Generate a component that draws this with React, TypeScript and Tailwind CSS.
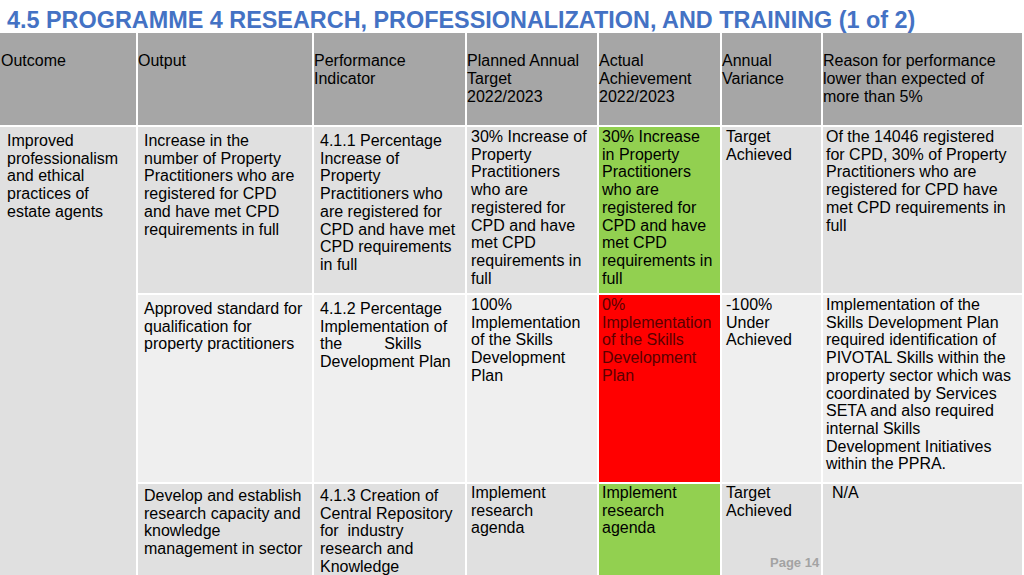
import type { ReactNode } from "react";

type Cell = {
  lines: ReactNode[];
  bg: string;
  pad: string;
  text?: string;
};

const headers = [
  ["Outcome"],
  ["Output"],
  ["Performance", "Indicator"],
  ["Planned Annual", "Target", "2022/2023"],
  ["Actual", "Achievement", "2022/2023"],
  ["Annual", "Variance"],
  ["Reason for performance", "lower than expected of", "more than 5%"],
];

const rowA = "bg-[#e0e0e0]";
const rowB = "bg-[#efefef]";
const green = "bg-[#92d050]";
const red = "bg-[#ff0000]";

const rows: Cell[][] = [
  [
    {
      lines: ["Increase in the", "number of Property", "Practitioners who are", "registered for CPD", "and have met CPD", "requirements in full"],
      bg: rowA,
      pad: "pl-[6px] pt-[5px]",
    },
    {
      lines: ["4.1.1 Percentage", "Increase of", "Property", "Practitioners who", "are registered for", "CPD and have met", "CPD requirements", "in full"],
      bg: rowA,
      pad: "pl-[6px] pt-[5px]",
    },
    {
      lines: ["30% Increase of", "Property", "Practitioners", "who are", "registered for", "CPD and have", "met CPD", "requirements in", "full"],
      bg: rowA,
      pad: "pl-[4px] pt-[1px]",
    },
    {
      lines: ["30% Increase", "in Property", "Practitioners", "who are", "registered for", "CPD and have", "met CPD", "requirements in", "full"],
      bg: green,
      pad: "pl-[3px] pt-[1px]",
    },
    { lines: ["Target", "Achieved"], bg: rowA, pad: "pl-[4px] pt-[1px]" },
    {
      lines: ["Of the 14046 registered", "for CPD, 30% of Property", "Practitioners who are", "registered for CPD have", "met CPD requirements in", "full"],
      bg: rowA,
      pad: "pl-[3px] pt-[1px]",
    },
  ],
  [
    {
      lines: ["Approved standard for", "qualification for", "property practitioners"],
      bg: rowB,
      pad: "pl-[6px] pt-[5px]",
    },
    {
      lines: [
        "4.1.2 Percentage",
        "Implementation of",
        <>
          <span>the</span>
          <span className="ml-[42px]">Skills</span>
        </>,
        "Development Plan",
      ],
      bg: rowB,
      pad: "pl-[6px] pt-[5px]",
    },
    {
      lines: ["100%", "Implementation", "of the Skills", "Development", "Plan"],
      bg: rowB,
      pad: "pl-[4px] pt-[1px]",
    },
    {
      lines: ["0%", "Implementation", "of the Skills", "Development", "Plan"],
      bg: red,
      pad: "pl-[3px] pt-[1px]",
      text: "text-[#5a0000]",
    },
    { lines: ["-100%", "Under", "Achieved"], bg: rowB, pad: "pl-[4px] pt-[1px]" },
    {
      lines: [
        "Implementation of the",
        "Skills Development Plan",
        "required identification of",
        "PIVOTAL Skills within the",
        "property sector which was",
        "coordinated by Services",
        "SETA and also required",
        "internal Skills",
        "Development Initiatives",
        "within the PPRA.",
      ],
      bg: rowB,
      pad: "pl-[3px] pt-[1px]",
    },
  ],
  [
    {
      lines: ["Develop and establish", "research capacity and", "knowledge", "management in sector"],
      bg: rowA,
      pad: "pl-[6px] pt-[3px]",
    },
    {
      lines: ["4.1.3 Creation of", "Central Repository", "for  industry", "research and", "Knowledge"],
      bg: rowA,
      pad: "pl-[6px] pt-[3px]",
    },
    { lines: ["Implement", "research", "agenda"], bg: rowA, pad: "pl-[4px] pt-0" },
    { lines: ["Implement", "research", "agenda"], bg: green, pad: "pl-[3px] pt-0" },
    { lines: ["Target", "Achieved"], bg: rowA, pad: "pl-[4px] pt-0" },
    { lines: ["N/A"], bg: rowA, pad: "pl-[9px] pt-0" },
  ],
];

function Lines({ lines }: { lines: ReactNode[] }) {
  return (
    <>
      {lines.map((l, i) => (
        <div key={i} className="whitespace-pre">
          {l}
        </div>
      ))}
    </>
  );
}

export default function App() {
  return (
    <div className="relative h-[575px] w-[1024px] overflow-hidden bg-white font-['Liberation_Sans',Arial,sans-serif] text-black">
      <div className="h-[33px] pl-[7px] pt-[9px] text-[23.4px] font-bold leading-none text-[#4472c4]">
        4.5 PROGRAMME 4 RESEARCH, PROFESSIONALIZATION, AND TRAINING (1 of 2)
      </div>

      <div className="grid w-[1022px] grid-cols-[136px_174px_151px_130px_121px_99px_199px] grid-rows-[92px_166px_187px_100px] gap-[2px] text-[16px]">
        {headers.map((h, i) => (
          <div key={i} className={`bg-[#a6a6a6] ${i === 0 ? "pl-[1px]" : "pl-0"} pt-[19px] leading-[18px]`}>
            <Lines lines={h} />
          </div>
        ))}

        <div className="row-span-3 bg-[#e0e0e0] pl-[7px] pt-[5px] leading-[17.7px]">
          <Lines lines={["Improved", "professionalism", "and ethical", "practices of", "estate agents"]} />
        </div>

        {rows.map((row, r) =>
          row.map((c, i) => (
            <div key={`${r}-${i}`} className={`${c.bg} ${c.pad} ${c.text ?? ""} leading-[17.7px]`}>
              <Lines lines={c.lines} />
            </div>
          ))
        )}
      </div>

      <div className="absolute left-[770px] top-[556px] text-[13px] font-bold leading-none text-[#a3a3a3]">
        Page 14
      </div>
    </div>
  );
}
